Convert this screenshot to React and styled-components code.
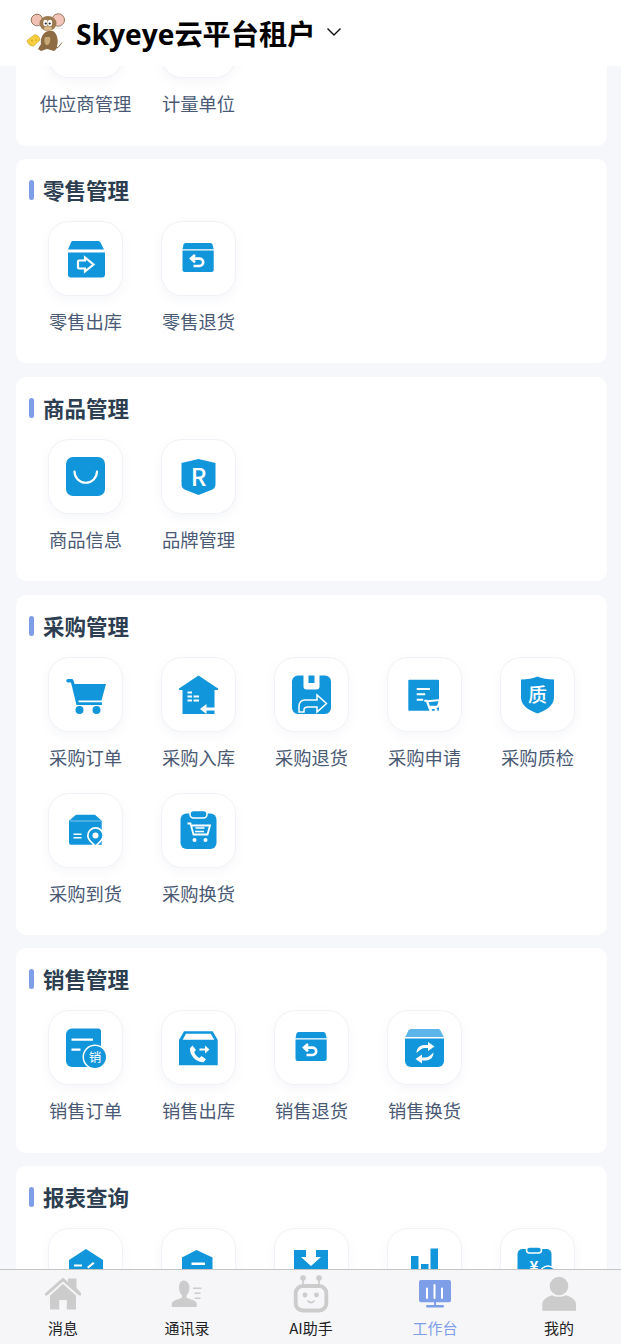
import React from "react";
import styled, { createGlobalStyle } from "styled-components";

const BLUE = "#1296db";
const CJK = `"Noto Sans CJK SC", "Noto Sans", sans-serif`;

const GlobalStyle = createGlobalStyle`
  html, body {
    margin: 0;
    height: 100%;
    overflow: hidden;
    background: #f5f7fb;
    font-family: ${CJK};
  }
`;

const Glyph = ({ children }) => (
  <svg viewBox="0 0 73 73" width="73" height="73" fill={BLUE}>
    {children}
  </svg>
);

const GlyphText = styled.text`
  fill: #fff;
  font-family: ${CJK};
  text-anchor: middle;
`;

const ReturnArrow = () => (
  <path
    d="M33 33l-4 3.6 4 3.6M29.5 36.6h8a3.6 3.6 0 0 1 0 7.4h-6"
    fill="none"
    stroke="#fff"
    strokeWidth="2.6"
  />
);

const RetailOut = () => (
  <Glyph>
    <path d="M24 19h25c1 0 2 .6 2.500 1.600L55 27.500H19l3-7c.4-1 1-1.500 2-1.500z" />
    <path d="M19 30.500h37v22a3 3 0 0 1-3 3H22a3 3 0 0 1-3-3z" />
    <path
      d="M30 38.500h6v-3l8.500 7-8.500 7v-3h-6a1 1 0 0 1-1-1v-6a1 1 0 0 1 1-1z"
      fill="none"
      stroke="#fff"
      strokeWidth="2.200"
    />
  </Glyph>
);

const BoxReturn = () => (
  <Glyph>
    <path d="M24 21h24c1 0 2 .5 2.500 1.500l1.200 4.700H20.500l1-4.700C22 21.500 23 21 24 21z" />
    <path d="M20.500 28.500h31.200v19.500a2 2 0 0 1-2 2H22.500a2 2 0 0 1-2-2z" />
    <ReturnArrow />
  </Glyph>
);

const GoodsInfo = () => (
  <Glyph>
    <rect x="17" y="17" width="39" height="39" rx="7" />
    <path
      d="M25.500 31.500a11 11 0 0 0 22.500 0"
      fill="none"
      stroke="#fff"
      strokeWidth="2.200"
      strokeLinecap="round"
    />
  </Glyph>
);

const BrandShield = () => (
  <Glyph>
    <path d="M36.500 19l17 4v21c0 3-1 4-3 5.500L36.500 55l-14-5.500c-2-1.500-3-2.500-3-5.500V23z" />
    <GlyphText x="36.500" y="45.500" fontSize="24" fontWeight="500">R</GlyphText>
  </Glyph>
);

const Cart = () => (
  <Glyph>
    <path d="M19 21h3.500c1 0 1.800.7 2 1.600L25.500 26H57l-4.500 16.500H29.500v1.800H53v2.600H27.500L22 24.500h-3a1.700 1.700 0 0 1 0-3.500z" />
    <circle cx="30.500" cy="52" r="4" />
    <circle cx="47.500" cy="52" r="4" />
  </Glyph>
);

const HouseIn = () => (
  <Glyph>
    <path d="M36.500 17.500L56 30.500v1.500h-3.500v24H20.500V32H17v-1.500z" />
    <path d="M25.500 33.500h4.500v2h-4.500zM25.500 37.500h4.500v2h-4.500zM25.500 41.500h4.500v2h-4.500zM31.500 37.500h5.500v2h-5.500zM31.500 41.500h5.500v2h-5.500z" fill="#fff" />
    <path d="M38 51l6.500-5v3.500h8.500v3h-8.500V56z" fill="#fff" />
  </Glyph>
);

const SaveShare = () => (
  <Glyph>
    <path d="M23 17.500h5.500v11a3 3 0 0 0 3 3h10a3 3 0 0 0 3-3v-11H50a6 6 0 0 1 6 6V50a6 6 0 0 1-6 6H23a6 6 0 0 1-6-6V23.500a6 6 0 0 1 6-6z" />
    <rect x="33.500" y="17.500" width="6" height="7.500" />
    <path
      d="M24 54v-5c0-4 2-7 6-7h12v-5l9.500 8.500-9.500 8.500v-5H33c-2.500 0-4 1-4 3v2z"
      fill="none"
      stroke="#fff"
      strokeWidth="1.500"
    />
  </Glyph>
);

const ApplyDoc = () => (
  <Glyph>
    <rect x="20.300" y="21.700" width="30.700" height="31" rx="1" />
    <path d="M28.700 30h13.300v2H28.700zM28.700 35.200h8.500v2h-8.500zM28.700 40.700h6.500v2h-6.500z" fill="#fff" />
    <path
      d="M36.300 42.700h2.400l2.600 7.300h7.400M39.300 43.300l12.700-1.300-2.300 6.700h-8.500z"
      fill={BLUE}
      stroke="#fff"
      strokeWidth="1.900"
    />
    <circle cx="42.500" cy="52" r="1.500" fill="#fff" />
    <circle cx="48" cy="52" r="1.500" fill="#fff" />
  </Glyph>
);

const QualityShield = () => (
  <Glyph>
    <path d="M36.500 18.500c4 2 10.500 3 16.500 3v18c0 8-8 13-16.500 16-8.500-3-16.500-8-16.500-16v-18c6 0 12.500-1 16.500-3z" />
    <GlyphText x="36.500" y="43.500" fontSize="19" fontWeight="500">质</GlyphText>
  </Glyph>
);

const Arrival = () => (
  <Glyph>
    <path d="M27 20.700h19l6.700 6v24H22a2 2 0 0 1-2-2V26.700z" />
    <path d="M21 27h31" stroke="#fff" strokeWidth="1" opacity=".5" />
    <path d="M24.500 39.500h8V41h-8zM24.500 43h8v1.500h-8z" fill="#fff" />
    <path d="M46.500 33a8.500 8.500 0 0 1 8.500 8.500c0 4.500-4.500 8-8.500 11.800-4-3.800-8.500-7.300-8.500-11.800a8.500 8.500 0 0 1 8.500-8.500z" fill="#fff" />
    <path d="M46.500 34.700a6.800 6.800 0 0 1 6.800 6.800c0 3.500-3.500 6.500-6.800 9.500-3.300-3-6.800-6-6.800-9.500a6.800 6.800 0 0 1 6.800-6.800z" />
    <circle cx="46.500" cy="41.500" r="3" fill="#fff" />
  </Glyph>
);

const ExchangeClip = () => (
  <Glyph>
    <rect x="18.500" y="19.500" width="36" height="35.500" rx="6" />
    <rect x="28" y="16.500" width="17" height="7.500" rx="3.500" stroke="#fff" strokeWidth="1.500" />
    <path
      d="M25.500 29.500h3l3 11h14l2.500-9H30"
      fill="none"
      stroke="#fff"
      strokeWidth="1.800"
    />
    <path d="M33.500 34h9M33 37.500h9" stroke="#fff" strokeWidth="1.500" />
    <circle cx="32.500" cy="46" r="2" fill="#fff" />
    <circle cx="43.500" cy="46" r="2" fill="#fff" />
  </Glyph>
);

const SalesOrder = () => (
  <Glyph>
    <path d="M23 17.500h26a3 3 0 0 1 3 3V56H23a6 6 0 0 1-6-6V23.500a6 6 0 0 1 6-6z" />
    <path d="M22.500 27.500h21.500v2.200H22.500zM22.500 37.500h9v2.200h-9z" fill="#fff" />
    <circle cx="46" cy="46" r="12.500" fill="#fff" />
    <circle cx="46" cy="46" r="11" />
    <GlyphText x="46" y="50.500" fontSize="12.500">销</GlyphText>
  </Glyph>
);

const SalesOut = () => (
  <Glyph>
    <path d="M22 20.300h28.700l5 8.700v25.300H17V29z" />
    <path d="M24 22.700h24.700l3.600 6H20.700z" fill="#fff" />
    <path d="M30.500 34.500l3.500 4.500-1.800 2c1 2.700 2.800 4.800 5.300 6l2-2 4.500 3.300-2.500 3c-7.500 0-14-6.800-13.500-14z" fill="#fff" />
    <path d="M37.500 37.500h5.500v-3l4.500 4-4.500 4v-3h-5.500z" fill="#fff" />
  </Glyph>
);

const SalesExchange = () => (
  <Glyph>
    <path d="M24 18h26c1 0 1.800.5 2.300 1.300l3.500 6.700H17.200l3.500-6.700C21.200 18.500 23 18 24 18z" fill="#5bb5e9" />
    <path d="M17 27.500h39V50a6 6 0 0 1-6 6H23a6 6 0 0 1-6-6z" />
    <path d="M28.500 42c0-5 3.500-8 8-8h3.500v-3l6.500 4.500-6.500 4.500v-3h-3c-3 0-5.500 2-8.500 5z" fill="#fff" />
    <path d="M45.500 41.500c0 5-3.500 8-8 8H34v3l-6.500-4.500 6.500-4.500v3h3c3 0 5.500-2 8.500-5z" fill="#fff" />
  </Glyph>
);

const ReportHouse = () => (
  <Glyph>
    <path d="M37 20l17 11v25H20V31z" />
    <path d="M25 35.500h8v2h-8zM38 38l6-5 1.500 1.500-6 5z" fill="#fff" />
  </Glyph>
);

const ReportBag = () => (
  <Glyph>
    <path d="M34.500 21l16 7.500V56H20V28.500z" />
    <path d="M29.500 33.500H43v2.500H29.500z" fill="#fff" />
  </Glyph>
);

const ReportDown = () => (
  <Glyph>
    <rect x="19" y="21" width="34" height="35" />
    <path d="M31 21h10v7h5l-10 9-10-9h5z" fill="#fff" />
  </Glyph>
);

const ReportBars = () => (
  <Glyph>
    <path d="M23 27h7.500v29H23zM33 35h7.500v21H33zM42.500 19.500h7.500V56h-7.500z" />
  </Glyph>
);

const ReportClip = () => (
  <Glyph>
    <rect x="16.500" y="20" width="34" height="36" rx="5" />
    <rect x="25.500" y="18" width="15" height="6" rx="3" stroke="#fff" strokeWidth="1.500" />
    <GlyphText x="33" y="43" fontSize="15" fontWeight="700">¥</GlyphText>
    <circle cx="47" cy="45" r="8" stroke="#fff" strokeWidth="1.500" />
  </Glyph>
);

const MouseLogo = () => (
  <svg viewBox="0 0 40 40" width="40" height="40">
    <circle cx="12" cy="7" r="5.800" fill="#f0c0b4" stroke="#8a6a48" strokeWidth=".9" />
    <circle cx="33.300" cy="7" r="6.200" fill="#f2c4ba" stroke="#8a6a48" strokeWidth=".9" />
    <ellipse cx="23" cy="10.500" rx="8.500" ry="7.500" fill="#9c7a4f" />
    <ellipse cx="20.500" cy="10" rx="2.200" ry="3.200" fill="#fff" />
    <ellipse cx="25" cy="10" rx="2.200" ry="3.200" fill="#fff" />
    <circle cx="20.800" cy="10.500" r="1.100" fill="#222" />
    <circle cx="24.700" cy="10.500" r="1.100" fill="#222" />
    <ellipse cx="23" cy="15.500" rx="4" ry="2.200" fill="#d8b98a" />
    <path d="M23 18c-5 1-8 8-7 13l-3 5 3 2 6-2 7 2c2-1 3-3 3-5 2-5 0-13-4-15z" fill="#8d6b43" />
    <path d="M20 24c-1 3-1 6 1 8 3 .5 5-3 4-8z" fill="#c9a878" />
    <path d="M29 35l4-.5 4-5" fill="none" stroke="#8d6b43" strokeWidth="1" />
    <path d="M2 27.500l8-6c2.500.5 4.500 2.500 5 5.500l-6.500 6c-3.500 0-6-2-6.500-5.500z" fill="#f8cf3f" stroke="#c99a1e" strokeWidth=".6" />
    <circle cx="7" cy="27.500" r="1" fill="#d9a520" />
    <circle cx="11" cy="27" r=".8" fill="#d9a520" />
    <path d="M31 13l7-1.500M31 15l7 .5M15 13l-6-1" stroke="#bbb" strokeWidth=".4" />
  </svg>
);

const Chevron = () => (
  <svg viewBox="0 0 16 10" width="16" height="10" fill="none" stroke="#111" strokeWidth="1.400">
    <path d="M1.500 1.500l6.500 6.500 6.500-6.500" />
  </svg>
);

const TabGlyph = ({ children, color = "#ccc" }) => (
  <svg viewBox="0 0 40 40" width="40" height="40" fill={color}>
    {children}
  </svg>
);

const HomeIcon = () => (
  <TabGlyph>
    <path d="M25 4.500h8.500V14L38 19v2.500h-2L20 7.500 4 21.500H2V19.500L20 3.500l5 4.500z" />
    <path d="M20 10l13 11.500V35.500H23.800V26h-7.600v9.500H7V21.500z" />
  </TabGlyph>
);

const ContactsIcon = () => (
  <TabGlyph>
    <path d="M16.500 6.500c3.500 0 6 3 6 7 0 3.500-1.500 6.500-3 8v2c2 1.500 7 2 9.500 4.500 1 1 1 3.500.5 5H5c-.5-1.500-.5-4 .5-5 2.500-2.500 7.500-3 9.500-4.500v-2c-1.500-1.500-3-4.500-3-8 0-4 2-7 4.500-7z" />
    <path d="M26 13.500h8.500v1.600H26zM27.500 18.500h6v1.600h-6zM27.500 23.500h6v1.600h-6z" />
  </TabGlyph>
);

const RobotIcon = () => (
  <TabGlyph>
    <circle cx="12" cy="4" r="2.800" />
    <circle cx="28" cy="4" r="2.800" />
    <path d="M12 4v8M28 4v8" stroke="#ccc" strokeWidth="1.600" />
    <rect x="4.700" y="12" width="30.600" height="24.500" rx="7" fill="#f6f6f9" stroke="#ccc" strokeWidth="3.800" />
    <circle cx="14" cy="21" r="2.400" />
    <circle cx="25.500" cy="21" r="2.400" />
    <path d="M17 27c1.500 2 4.500 2 6 0" fill="none" stroke="#ccc" strokeWidth="1.800" strokeLinecap="round" />
  </TabGlyph>
);

const DeskIcon = () => (
  <TabGlyph color="#7f9ee8">
    <rect x="4" y="6" width="32" height="22.300" rx="2" />
    <rect x="11" y="31" width="18" height="2.600" rx="1.300" />
    <rect x="19" y="28" width="2" height="4" />
    <path d="M12 14.500v9.500M19.500 11v13M27 14.500v9.500" stroke="#fff" strokeWidth="2" strokeLinecap="round" />
  </TabGlyph>
);

const MeIcon = () => (
  <TabGlyph>
    <circle cx="20" cy="12" r="9.300" />
    <path d="M3.300 36.700V30c0-4.500 5-7.500 10-8.800 4 2 9.500 2 13.400 0 5 1.300 10.300 4.300 10.300 8.800v6.700z" />
  </TabGlyph>
);

const sections = [
  {
    title: "基础资料",
    items: [
      { label: "供应商管理", icon: Arrival },
      { label: "计量单位", icon: GoodsInfo },
    ],
  },
  {
    title: "零售管理",
    items: [
      { label: "零售出库", icon: RetailOut },
      { label: "零售退货", icon: BoxReturn },
    ],
  },
  {
    title: "商品管理",
    items: [
      { label: "商品信息", icon: GoodsInfo },
      { label: "品牌管理", icon: BrandShield },
    ],
  },
  {
    title: "采购管理",
    items: [
      { label: "采购订单", icon: Cart },
      { label: "采购入库", icon: HouseIn },
      { label: "采购退货", icon: SaveShare },
      { label: "采购申请", icon: ApplyDoc },
      { label: "采购质检", icon: QualityShield },
      { label: "采购到货", icon: Arrival },
      { label: "采购换货", icon: ExchangeClip },
    ],
  },
  {
    title: "销售管理",
    items: [
      { label: "销售订单", icon: SalesOrder },
      { label: "销售出库", icon: SalesOut },
      { label: "销售退货", icon: BoxReturn },
      { label: "销售换货", icon: SalesExchange },
    ],
  },
  {
    title: "报表查询",
    items: [
      { label: "入库明细", icon: ReportHouse },
      { label: "出库明细", icon: ReportBag },
      { label: "进销存", icon: ReportDown },
      { label: "销售统计", icon: ReportBars },
      { label: "采购统计", icon: ReportClip },
    ],
  },
];

const tabs = [
  { label: "消息", icon: HomeIcon },
  { label: "通讯录", icon: ContactsIcon },
  { label: "AI助手", icon: RobotIcon },
  { label: "工作台", icon: DeskIcon, active: true },
  { label: "我的", icon: MeIcon },
];

const App = () => (
  <Page>
    <GlobalStyle />
    <Header>
      <MouseLogo />
      <HeaderTitle>Skyeye云平台租户</HeaderTitle>
      <Chevron />
    </Header>
    <List>
      {sections.map((section) => (
        <Card key={section.title}>
          <CardTitle>{section.title}</CardTitle>
          <Grid>
            {section.items.map(({ label, icon: Icon }) => (
              <Cell key={label}>
                <Tile>
                  <Icon />
                </Tile>
                <CellLabel>{label}</CellLabel>
              </Cell>
            ))}
          </Grid>
        </Card>
      ))}
    </List>
    <TabBar>
      {tabs.map(({ label, icon: Icon, active }) => (
        <Tab key={label} $active={active}>
          <Icon />
          <span>{label}</span>
        </Tab>
      ))}
    </TabBar>
  </Page>
);

export default App;

const Page = styled.div`
  height: 100vh;
  overflow: hidden;
`;

const Header = styled.header`
  position: fixed;
  top: 0;
  left: 0;
  right: 0;
  z-index: 2;
  height: 66px;
  box-sizing: border-box;
  padding-left: 25px;
  display: flex;
  align-items: center;
  background: #fff;
  svg:last-child {
    margin-left: 11px;
    margin-bottom: 2px;
  }
`;

const HeaderTitle = styled.h1`
  margin: 0 0 2px 11px;
  font-family: "Open Sans", ${CJK};
  font-size: 28.2px;
  font-weight: 700;
  color: #000;
  white-space: nowrap;
`;

const List = styled.main`
  margin-top: -58.9px;
  padding: 0 14px 0 16px;
  display: flex;
  flex-direction: column;
  gap: 13.3px;
`;

const Card = styled.section`
  padding: 21px 13px 5.5px;
  background: #fff;
  border-radius: 10px;
`;

const CardTitle = styled.h2`
  margin: 0 0 22px;
  height: 20px;
  display: flex;
  align-items: flex-start;
  gap: 9px;
  font-size: 21.5px;
  line-height: 20px;
  font-weight: 700;
  color: #2c3e50;
  &::before {
    content: "";
    width: 5px;
    height: 20px;
    flex: none;
    border-radius: 3px;
    background: #7f9ee8;
  }
`;

const Grid = styled.div`
  display: grid;
  grid-template-columns: repeat(5, 113px);
  grid-auto-rows: 136px;
`;

const Cell = styled.div`
  display: flex;
  flex-direction: column;
  align-items: center;
`;

const Tile = styled.div`
  width: 73px;
  height: 73px;
  flex: none;
  border-radius: 20px;
  background: #fff;
  box-shadow: 0 0 0 1px #f1f2f7, 0 4px 12px rgba(120, 130, 170, 0.08);
  svg {
    display: block;
  }
`;

const CellLabel = styled.div`
  margin-top: 13px;
  font-size: 18.3px;
  line-height: 26px;
  color: #4a5a75;
  white-space: nowrap;
`;

const TabBar = styled.nav`
  position: fixed;
  left: 0;
  right: 0;
  bottom: 0;
  z-index: 2;
  height: 75px;
  box-sizing: border-box;
  padding: 4px 0 0 1px;
  display: grid;
  grid-template-columns: repeat(5, 1fr);
  background: #f6f6f9;
  border-top: 1px solid #c4c4c4;
`;

const Tab = styled.div`
  display: flex;
  flex-direction: column;
  align-items: center;
  font-size: 15px;
  line-height: 20px;
  color: ${({ $active }) => ($active ? "#7f9ee8" : "#222")};
  span {
    margin-top: 4px;
  }
`;
